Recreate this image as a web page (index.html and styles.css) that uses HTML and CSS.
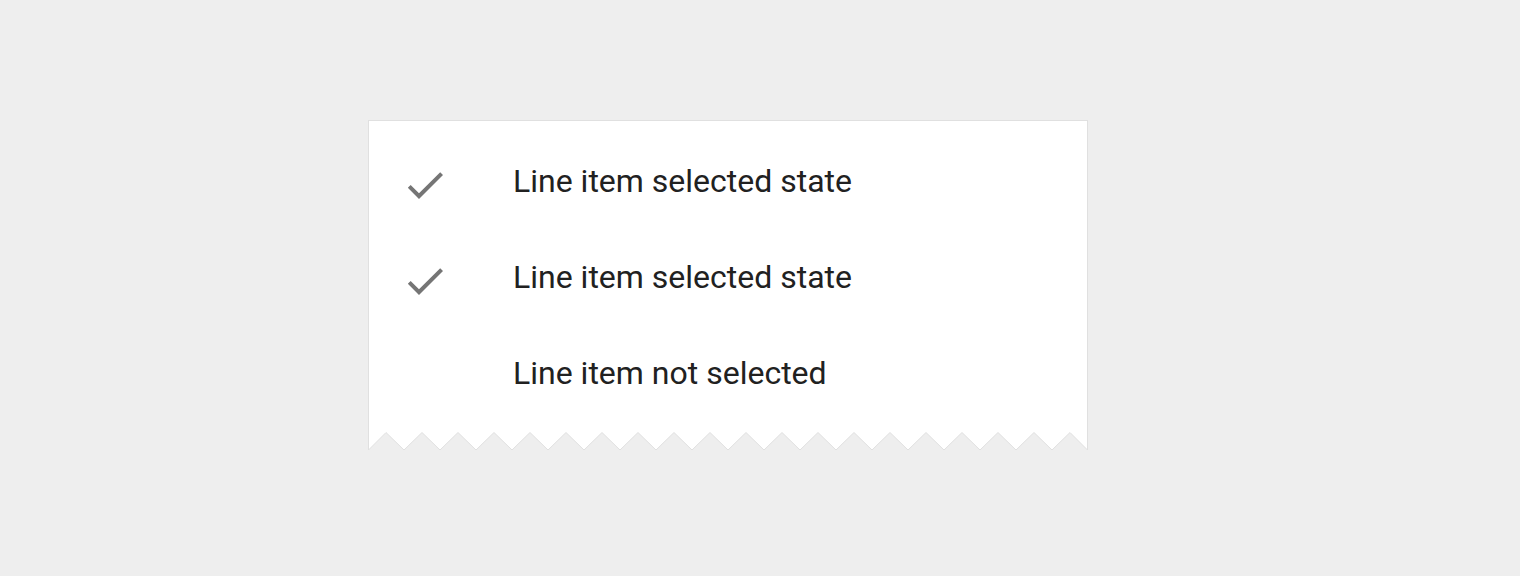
FILE: index.html
```html
<!DOCTYPE html>
<html lang="en">
<head>
    <meta charset="UTF-8">
    <title>Menu line items</title>
    <link rel="stylesheet" href="styles.css">
</head>
<body>
    <div class="menu">
        <ul class="menu-list">
            <li class="menu-item">
                <span class="menu-icon">
                    <svg viewBox="0 0 24 24" width="48" height="48"><path d="M9 16.17L4.83 12l-1.42 1.41L9 19 21 7l-1.41-1.41z"/></svg>
                </span>
                <span class="menu-text">Line item selected state</span>
            </li>
            <li class="menu-item">
                <span class="menu-icon">
                    <svg viewBox="0 0 24 24" width="48" height="48"><path d="M9 16.17L4.83 12l-1.42 1.41L9 19 21 7l-1.41-1.41z"/></svg>
                </span>
                <span class="menu-text">Line item selected state</span>
            </li>
            <li class="menu-item">
                <span class="menu-icon"></span>
                <span class="menu-text">Line item not selected</span>
            </li>
        </ul>
        <!-- torn edge at the bottom of the card -->
        <svg class="menu-edge" width="720" height="19" viewBox="0 0 720 19">
            <polyline points="0.5,0 0.5,18 18,0.5 36,18 54,0.5 72,18 90,0.5 108,18 126,0.5 144,18 162,0.5 180,18 198,0.5 216,18 234,0.5 252,18 270,0.5 288,18 306,0.5 324,18 342,0.5 360,18 378,0.5 396,18 414,0.5 432,18 450,0.5 468,18 486,0.5 504,18 522,0.5 540,18 558,0.5 576,18 594,0.5 612,18 630,0.5 648,18 666,0.5 684,18 702,0.5 719.5,18 719.5,0" />
        </svg>
    </div>
</body>
</html>
```

FILE: styles.css
```css
body {
    margin: 0;
    background: #eeeeee;
    font-family: Roboto, "Noto Sans", Arial, sans-serif;
}
.menu {
    width: 720px;
    margin: 120px 0 0 368px;
}
.menu-list {
    list-style: none;
    margin: 0;
    padding: 16px 32px 8px 32px;
    background: #fff;
    border: 1px solid #e0e0e0;
    border-bottom: none;
}
.menu-item {
    display: flex;
    align-items: center;
    height: 96px;
}
.menu-icon {
    width: 48px;
    height: 48px;
    margin-right: 64px;
    flex-shrink: 0;
}
.menu-icon svg {
    display: block;
    fill: #757575;
}
.menu-text {
    font-size: 32px;
    color: #212121;
    margin-bottom: 8px;
}
.menu-edge {
    display: block;
    margin-top: -1px;
}
.menu-edge polyline {
    fill: #fff;
    stroke: #e0e0e0;
    stroke-width: 1;
}
```
